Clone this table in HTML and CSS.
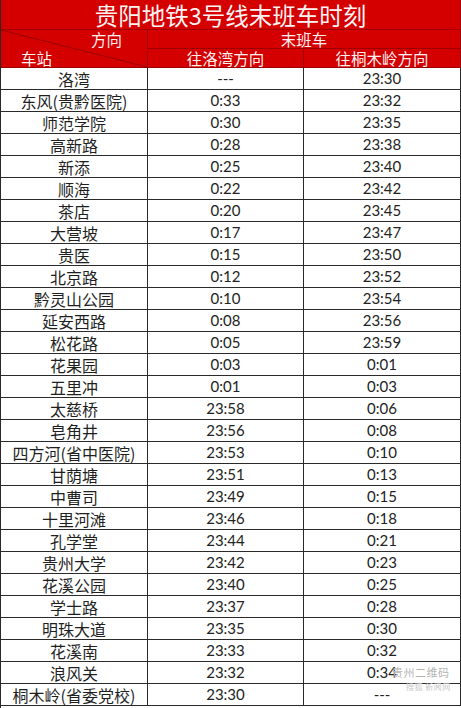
FILE: index.html
```html
<!DOCTYPE html>
<html lang="zh-CN">
<head>
<meta charset="utf-8">
<title>贵阳地铁3号线末班车时刻</title>
<link rel="stylesheet" href="styles.css">
</head>
<body>
<div class="sheet">
  <div class="title">贵阳地铁3号线末班车时刻</div>
  <div class="hd diag"><span class="dir">方向</span><span class="stn">车站</span></div>
  <div class="hd span2">末班车</div>
  <div class="hd">往洛湾方向</div>
  <div class="hd last">往桐木岭方向</div>

  <div class="st">洛湾</div><div class="t">---</div><div class="t last">23:30</div>
  <div class="st">东风(贵黔医院)</div><div class="t">0:33</div><div class="t last">23:32</div>
  <div class="st">师范学院</div><div class="t">0:30</div><div class="t last">23:35</div>
  <div class="st">高新路</div><div class="t">0:28</div><div class="t last">23:38</div>
  <div class="st">新添</div><div class="t">0:25</div><div class="t last">23:40</div>
  <div class="st">顺海</div><div class="t">0:22</div><div class="t last">23:42</div>
  <div class="st">茶店</div><div class="t">0:20</div><div class="t last">23:45</div>
  <div class="st">大营坡</div><div class="t">0:17</div><div class="t last">23:47</div>
  <div class="st">贵医</div><div class="t">0:15</div><div class="t last">23:50</div>
  <div class="st">北京路</div><div class="t">0:12</div><div class="t last">23:52</div>
  <div class="st">黔灵山公园</div><div class="t">0:10</div><div class="t last">23:54</div>
  <div class="st">延安西路</div><div class="t">0:08</div><div class="t last">23:56</div>
  <div class="st">松花路</div><div class="t">0:05</div><div class="t last">23:59</div>
  <div class="st">花果园</div><div class="t">0:03</div><div class="t last">0:01</div>
  <div class="st">五里冲</div><div class="t">0:01</div><div class="t last">0:03</div>
  <div class="st">太慈桥</div><div class="t">23:58</div><div class="t last">0:06</div>
  <div class="st">皂角井</div><div class="t">23:56</div><div class="t last">0:08</div>
  <div class="st">四方河(省中医院)</div><div class="t">23:53</div><div class="t last">0:10</div>
  <div class="st">甘荫塘</div><div class="t">23:51</div><div class="t last">0:13</div>
  <div class="st">中曹司</div><div class="t">23:49</div><div class="t last">0:15</div>
  <div class="st">十里河滩</div><div class="t">23:46</div><div class="t last">0:18</div>
  <div class="st">孔学堂</div><div class="t">23:44</div><div class="t last">0:21</div>
  <div class="st">贵州大学</div><div class="t">23:42</div><div class="t last">0:23</div>
  <div class="st">花溪公园</div><div class="t">23:40</div><div class="t last">0:25</div>
  <div class="st">学士路</div><div class="t">23:37</div><div class="t last">0:28</div>
  <div class="st">明珠大道</div><div class="t">23:35</div><div class="t last">0:30</div>
  <div class="st">花溪南</div><div class="t">23:33</div><div class="t last">0:32</div>
  <div class="st">浪风关</div><div class="t">23:32</div><div class="t last wm-cell"><span class="wm-time">0:34</span><span class="watermark"><span class="wm1">贵州二维码</span><span class="wm2">搜狐 新闻网</span></span></div>
  <div class="st">桐木岭(省委党校)</div><div class="t">23:30</div><div class="t last">---</div>
</div>
</body>
</html>
```
FILE: styles.css
```css
html, body {
  margin: 0;
  padding: 0;
  background: #ffffff;
}

.sheet {
  width: 461px;
  height: 708px;
  overflow: hidden;
  display: grid;
  grid-template-columns: 147px 156px 157px;
  grid-template-rows: 30px 19px 19px repeat(29, 22px);
  border-left: 1px solid #2a2a2a;
  box-sizing: border-box;
  font-family: "Noto Sans CJK SC", "Noto Sans", sans-serif;
}

.sheet > div {
  box-sizing: border-box;
  display: flex;
  align-items: center;
  justify-content: center;
  white-space: nowrap;
}

.title {
  grid-column: 1 / 4;
  background: #d40000;
  color: #fff3f3;
  font-size: 23.5px;
  font-weight: 400;
  line-height: 28px;
  border-bottom: 1px solid #a30000;
  border-right: 1px solid #a30000;
}

.hd {
  background: #d40000;
  color: #fff0f0;
  font-size: 15.5px;
  line-height: 1;
  border-right: 1px solid #9c0000;
  border-bottom: 1px solid #9c0000;
  padding-top: 1px;
}

.hd.span2 {
  grid-column: 2 / 4;
}

.hd.diag {
  grid-row: 2 / 4;
  flex-direction: column;
  align-items: stretch;
  justify-content: space-between;
  padding: 2px 0 0 0;
  background:
    linear-gradient(to top right, transparent calc(50% - 0.8px), #8c0000 50%, transparent calc(50% + 0.8px)),
    #d40000;
}

.diag .dir {
  display: block;
  text-align: right;
  padding-right: 25px;
  line-height: 15px;
}

.diag .stn {
  display: block;
  text-align: left;
  padding-left: 20px;
  line-height: 17px;
}

.st,
.t {
  border-right: 1px solid #2a2a2a;
  border-bottom: 1px solid #2a2a2a;
  color: #1f1f1f;
}

.st {
  font-size: 16px;
  line-height: 1;
}

.t {
  font-family: "Lato", "Liberation Sans", sans-serif;
  font-size: 15px;
  line-height: 1;
  color: #232323;
}

.wm-cell {
  position: relative;
}

.watermark {
  position: absolute;
  left: 88px;
  top: 4px;
  display: flex;
  flex-direction: column;
  align-items: flex-start;
  font-family: "Noto Sans CJK SC", sans-serif;
  color: rgba(165, 165, 165, 0.85);
  text-shadow: 0 0 1px #ffffff;
  pointer-events: none;
}

.wm1 {
  font-size: 11px;
  line-height: 13px;
  letter-spacing: 0.5px;
}

.wm2 {
  font-size: 8px;
  line-height: 10px;
  margin-left: 14px;
  margin-top: 3px;
  letter-spacing: 0.5px;
  color: rgba(185, 185, 185, 0.8);
}
```
